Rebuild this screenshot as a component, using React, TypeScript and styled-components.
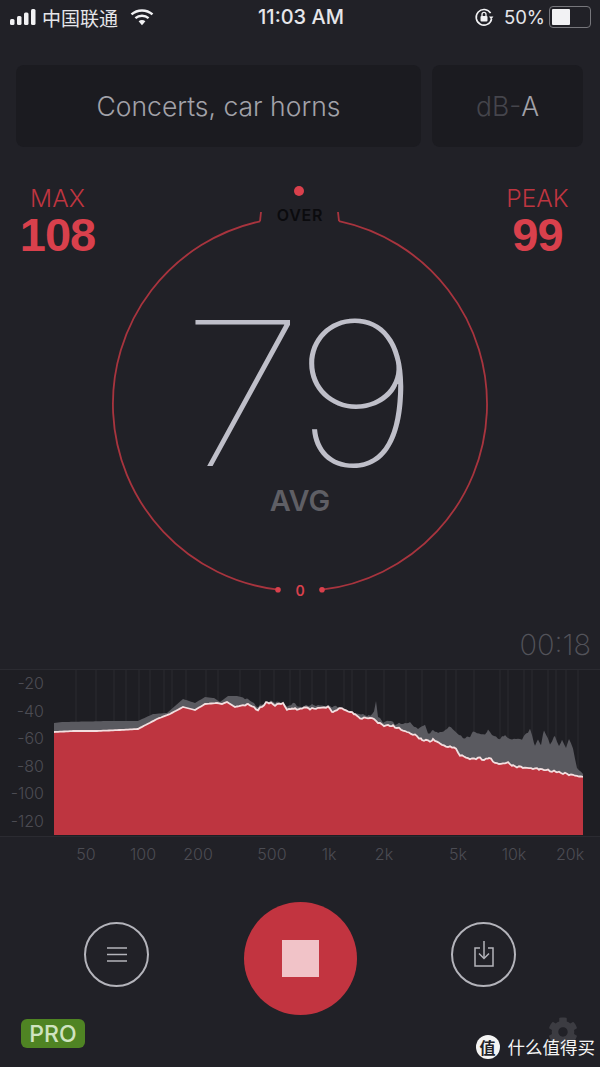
import React from "react";
import styled, { createGlobalStyle } from "styled-components";
import { FaCog } from "react-icons/fa";

const GlobalStyle = createGlobalStyle`
    html, body {
        margin: 0;
        padding: 0;
        background: #212127;
        font-family: "Inter", "Noto Sans CJK SC", sans-serif;
    }
`;

const RED = "#be3540";
const BRIGHT_RED = "#d9404c";

const Page = styled.div`
    position: relative;
    width: 600px;
    height: 1067px;
    overflow: hidden;
    background: #212127;
    display: flex;
    flex-direction: column;
`;

const StatusBar = styled.div`
    height: 34px;
    padding: 0 8px 0 10px;
    display: grid;
    grid-template-columns: 1fr auto 1fr;
    align-items: center;
    color: #e6e6ea;
    font-size: 18px;
`;

const StatusLeft = styled.div`
    display: flex;
    align-items: center;
    gap: 5px;
`;

const Carrier = styled.span`
    font-family: "Noto Sans CJK SC", sans-serif;
    font-size: 19px;
    margin-right: 7px;
`;

const Clock = styled.span`
    font-weight: 500;
    font-size: 20px;
`;

const StatusRight = styled.div`
    display: flex;
    align-items: center;
    justify-content: flex-end;
    gap: 4px;
`;

const Percent = styled.span`
    margin-left: 6px;
    font-weight: 400;
    font-size: 18.5px;
`;

const BatteryShell = styled.div`
    width: 36px;
    height: 16px;
    border: 1px solid #77777c;
    border-radius: 4px;
    padding: 2px;
    box-sizing: content-box;
    display: flex;
    margin-right: 1px;
`;

const BatteryFill = styled.div`
    width: 50%;
    background: #f2f2f4;
    border-radius: 1px;
`;

const SelectorRow = styled.div`
    margin-top: 31px;
    padding: 0 17px 0 16px;
    display: grid;
    grid-template-columns: 405px 1fr;
    gap: 11px;
    height: 82px;
`;

const Selector = styled.div`
    background: #1b1b20;
    border-radius: 8px;
    display: flex;
    align-items: center;
    justify-content: center;
    font-size: 26.5px;
    font-weight: 300;
    color: #a2a2a9;
`;

const DimUnit = styled.span`
    color: #45454c;
`;

const GaugeRow = styled.div`
    margin-top: 33px;
    height: 420px;
    display: grid;
    grid-template-columns: 110px 380px 110px;
`;

const Stat = styled.div<{ $side: "left" | "right" }>`
    display: flex;
    flex-direction: column;
    align-items: center;
    padding: ${(p) => (p.$side === "left" ? "6px 0 0 5px" : "6px 15px 0 0")};
`;

const StatLabel = styled.span`
    color: ${RED};
    font-size: 24.5px;
    line-height: 24px;
    font-weight: 300;
`;

const StatValue = styled.span`
    margin-top: 2px;
    color: ${BRIGHT_RED};
    font-family: "Liberation Sans", sans-serif;
    font-size: 47px;
    line-height: 46px;
    font-weight: 700;
    letter-spacing: -1px;
`;

const GaugeStage = styled.div`
    position: relative;
    display: flex;
    flex-direction: column;
    align-items: center;
`;

const GaugeRing = styled.svg`
    position: absolute;
    left: 0;
    top: 0;
`;

const OverLabel = styled.span`
    position: absolute;
    top: 25px;
    left: 0;
    right: 0;
    text-align: center;
    color: #0b0b0e;
    font-size: 16px;
    font-weight: 600;
    letter-spacing: 0.8px;
`;

const BigValue = styled.span`
    position: absolute;
    top: 113px;
    left: 0;
    right: 0;
    text-align: center;
    color: #bfbfc9;
    font-size: 200px;
    line-height: 200px;
    font-weight: 100;
    letter-spacing: -8px;
    transform: translateX(-4px) scaleX(1.12);
`;

const AvgLabel = styled.span`
    position: absolute;
    top: 303px;
    left: 0;
    right: 0;
    text-align: center;
    color: #5f5f65;
    font-size: 29px;
    font-weight: 600;
`;

const ZeroLabel = styled.span`
    position: absolute;
    top: 402px;
    left: 0;
    right: 0;
    text-align: center;
    color: ${BRIGHT_RED};
    font-size: 14px;
    font-weight: 600;
`;

const Timer = styled.div`
    margin-top: 28px;
    padding-right: 9px;
    text-align: right;
    color: #53535a;
    font-size: 29px;
    line-height: 34px;
    font-weight: 200;
`;

const ChartPanel = styled.div`
    margin-top: 7px;
    height: 166px;
    display: grid;
    grid-template-columns: 54px 529px 17px;
    background: #1e1e23;
    border-top: 1px solid #2b2b31;
    border-bottom: 1px solid #2b2b31;
`;

const YAxis = styled.div`
    display: flex;
    flex-direction: column;
    justify-content: space-between;
    padding: 3px 10px 5px 0;
    align-items: flex-end;
`;

const AxisText = styled.span`
    color: #4c4c53;
    font-size: 16px;
    line-height: 20px;
    font-weight: 300;
`;

const XAxis = styled.div`
    height: 34px;
    padding-left: 66px;
    display: flex;
    align-items: center;
`;

const XTick = styled(AxisText)<{ $gap: number }>`
    width: 40px;
    flex: none;
    text-align: center;
    white-space: nowrap;
    margin-left: ${(p) => p.$gap}px;
`;

const Controls = styled.div`
    margin-top: 31px;
    height: 113px;
    padding: 0 84px;
    display: flex;
    align-items: center;
    justify-content: space-between;
`;

const RoundButton = styled.div`
    width: 61px;
    height: 61px;
    border: 2px solid #b4b4bb;
    border-radius: 50%;
    display: flex;
    align-items: center;
    justify-content: center;
    color: #b4b4bb;
    margin-bottom: 9px;
`;

const RecordButton = styled.div`
    width: 113px;
    height: 113px;
    border-radius: 50%;
    background: #c23440;
    display: flex;
    align-items: center;
    justify-content: center;
`;

const StopSquare = styled.div`
    width: 37px;
    height: 37px;
    background: #f1c3c8;
`;

const Footer = styled.div`
    padding: 4px 21px 0;
    display: flex;
    justify-content: space-between;
    align-items: flex-start;
`;

const ProBadge = styled.div`
    width: 64px;
    height: 29px;
    border-radius: 6px;
    background: #4f8423;
    color: #cfe3c0;
    font-size: 23px;
    font-weight: 500;
    display: flex;
    align-items: center;
    justify-content: center;
`;

const Gear = styled(FaCog)`
    color: #3c3c42;
    font-size: 30px;
    margin-right: 1px;
    margin-top: -2px;
`;

const Watermark = styled.div`
    position: absolute;
    right: 5px;
    bottom: 7px;
    display: flex;
    align-items: center;
    gap: 8px;
    color: #f4f4f4;
    font-family: "Noto Sans CJK SC", sans-serif;
    font-size: 17.5px;
    line-height: 26px;
`;

const WatermarkMark = styled.span`
    width: 24px;
    height: 24px;
    border-radius: 50%;
    background: #f4f4f4;
    color: #222228;
    font-size: 16px;
    font-weight: 700;
    display: flex;
    align-items: center;
    justify-content: center;
`;

// spectrum traces, read off the picture as x, y in chart pixels
const levelTrace = [
    [0, 62], [19, 61], [43, 61], [66, 60], [84, 59], [103, 49], [116, 44], [129, 37], [141, 40], [151, 34],
    [163, 33], [168, 34], [173, 32], [181, 37], [194, 34], [204, 40], [213, 32], [221, 35], [229, 33], [233, 40],
    [238, 38], [241, 39], [246, 39], [251, 37], [256, 39], [274, 37], [279, 42], [286, 38], [301, 44], [306, 48],
    [318, 48], [328, 55], [339, 56], [353, 62], [363, 66], [368, 70], [378, 71], [379, 69], [386, 74], [394, 77],
    [400, 77], [406, 85], [416, 89], [426, 88], [430, 90], [435, 88], [443, 94], [454, 93], [459, 96], [473, 98],
    [486, 99], [503, 102], [513, 104], [529, 107],
];

const peakTrace = [
    [0, 53], [9, 52], [56, 51], [84, 51], [99, 44], [113, 43], [129, 29], [141, 33], [151, 27], [160, 28],
    [166, 32], [174, 26], [183, 26], [194, 29], [204, 37], [213, 31], [229, 33], [233, 37], [239, 33], [246, 37],
    [256, 35], [274, 36], [286, 37], [301, 43], [316, 46], [320, 42], [322, 31], [324, 46], [329, 53], [335, 50],
    [341, 54], [356, 53], [364, 59], [371, 54], [374, 64], [379, 60], [384, 63], [391, 61], [395, 56], [403, 63],
    [409, 68], [416, 67], [419, 62], [431, 65], [434, 59], [438, 65], [446, 69], [451, 65], [454, 69], [468, 69],
    [476, 59], [481, 76], [484, 70], [487, 75], [490, 60], [496, 74], [501, 66], [505, 77], [508, 70], [512, 78],
    [515, 68], [519, 79], [523, 98], [529, 104],
];

const gridLines = [
    22, 42, 60, 72, 85, 96, 110, 118, 132, 152, 164, 186, 206, 220, 236, 246, 258, 272, 290, 298, 312, 330, 352,
    368, 392, 402, 420, 446, 454, 470, 478, 494, 502, 512, 524,
];

const CHART_HEIGHT = 165;

// fill in the traces at 2px steps with a little wobble so they read as measured data
const roughen = (trace: number[][], amount: number) => {
    const out: number[][] = [];
    for (let i = 0; i < trace.length - 1; i++) {
        const [x0, y0] = trace[i];
        const [x1, y1] = trace[i + 1];
        for (let x = x0; x < x1; x += 2) {
            const y = y0 + ((y1 - y0) * (x - x0)) / (x1 - x0);
            const wobble = x > 190 ? Math.sin(x * 1.7) * Math.cos(x * 0.61) * amount : 0;
            out.push([x, +(y + wobble).toFixed(1)]);
        }
    }
    out.push(trace[trace.length - 1]);
    return out;
};

const level = roughen(levelTrace, 1);
const peak = roughen(peakTrace, 1.2);

const toPoints = (trace: number[][]) => trace.map(([x, y]) => `${x},${y}`).join(" ");

const toArea = (trace: number[][]) => `0,${CHART_HEIGHT} ${toPoints(trace)} 529,${CHART_HEIGHT}`;

const Spectrum = () => (
    <svg width="529" height={CHART_HEIGHT} viewBox={`0 0 529 ${CHART_HEIGHT}`}>
        {gridLines.map((x) => (
            <line key={x} x1={x} x2={x} y1="0" y2={CHART_HEIGHT} stroke="#2a2a30" strokeWidth="1" />
        ))}
        <polygon points={toArea(peak)} fill="#5a5a60" />
        <polygon points={toArea(level)} fill={RED} />
        <polyline points={toPoints(level)} fill="none" stroke="#f3dfe0" strokeWidth="1.8" />
    </svg>
);

const SignalIcon = () => (
    <svg width="27" height="16" viewBox="0 0 27 16">
        <rect x="0" y="10" width="4.5" height="6" rx="1.5" fill="#f2f2f4" />
        <rect x="7" y="7" width="4.5" height="9" rx="1.5" fill="#f2f2f4" />
        <rect x="14" y="3.5" width="4.5" height="12.5" rx="1.5" fill="#f2f2f4" />
        <rect x="21" y="0" width="4.5" height="16" rx="1.5" fill="#f2f2f4" />
    </svg>
);

const WifiIcon = () => (
    <svg width="24" height="18" viewBox="0 0 24 18">
        <g fill="none" stroke="#f2f2f4" strokeWidth="2.4">
            <path d="M1.5 6.4C7.4 1.1 16.6 1.1 22.5 6.4" />
            <path d="M5.4 10.2C9.1 7 14.9 7 18.6 10.2" />
        </g>
        <path d="M8.6 13.2C10.6 11.7 13.4 11.7 15.4 13.2L12 17.2Z" fill="#f2f2f4" />
    </svg>
);

const RotationLockIcon = () => (
    <svg width="20" height="20" viewBox="0 0 20 20">
        <path d="M16.6 6.2A7.8 7.8 0 1 0 17.6 12" fill="none" stroke="#f2f2f4" strokeWidth="1.6" />
        <path d="M19.4 9.5L15 9.5L17.2 12.6Z" fill="#f2f2f4" />
        <rect x="6.5" y="9" width="7" height="5.5" rx="1" fill="#f2f2f4" />
        <path d="M8 9V7.4a2 2 0 0 1 4 0V9" fill="none" stroke="#f2f2f4" strokeWidth="1.3" />
    </svg>
);

const MenuIcon = () => (
    <svg width="20" height="15" viewBox="0 0 20 15" stroke="currentColor" strokeWidth="1.5">
        <line x1="0" x2="20" y1="1" y2="1" />
        <line x1="0" x2="20" y1="7.5" y2="7.5" />
        <line x1="0" x2="20" y1="14" y2="14" />
    </svg>
);

const ExportIcon = () => (
    <svg width="20" height="26" viewBox="0 0 20 26" fill="none" stroke="currentColor" strokeWidth="1.5">
        <path d="M6 7H1V25H19V7H14" />
        <path d="M10 0V17" />
        <path d="M5 12.5L10 17.5L15 12.5" />
    </svg>
);

// all in stage pixels, ring centre at 190,224
const Ring = () => (
    <GaugeRing width="380" height="420" viewBox="0 0 380 420">
        <g fill="none" stroke="#a8343e" strokeWidth="1.8">
            <path d="M229 41.1A187 187 0 0 1 212 409.7" />
            <path d="M168 409.7A187 187 0 0 1 150 41.3" />
            <path d="M150 41.3L151 32" />
            <path d="M229 41.1L228 32" />
        </g>
        <circle cx="189" cy="11" r="5" fill={BRIGHT_RED} />
        <circle cx="168" cy="409.7" r="2.8" fill={BRIGHT_RED} />
        <circle cx="212" cy="409.7" r="2.8" fill={BRIGHT_RED} />
    </GaugeRing>
);

export default function App() {
    const yLabels = ["-20", "-40", "-60", "-80", "-100", "-120"];
    const xLabels: [string, number][] = [
        ["50", 0],
        ["100", 17],
        ["200", 15],
        ["500", 34],
        ["1k", 17],
        ["2k", 15],
        ["5k", 34],
        ["10k", 16],
        ["20k", 16],
    ];

    return (
        <Page>
            <GlobalStyle />
            <StatusBar>
                <StatusLeft>
                    <SignalIcon />
                    <Carrier>中国联通</Carrier>
                    <WifiIcon />
                </StatusLeft>
                <Clock>11:03 AM</Clock>
                <StatusRight>
                    <RotationLockIcon />
                    <Percent>50%</Percent>
                    <BatteryShell>
                        <BatteryFill />
                    </BatteryShell>
                </StatusRight>
            </StatusBar>

            <SelectorRow>
                <Selector>Concerts, car horns</Selector>
                <Selector>
                    <DimUnit>dB-</DimUnit>A
                </Selector>
            </SelectorRow>

            <GaugeRow>
                <Stat $side="left">
                    <StatLabel>MAX</StatLabel>
                    <StatValue>108</StatValue>
                </Stat>
                <GaugeStage>
                    <Ring />
                    <OverLabel>OVER</OverLabel>
                    <BigValue>79</BigValue>
                    <AvgLabel>AVG</AvgLabel>
                    <ZeroLabel>0</ZeroLabel>
                </GaugeStage>
                <Stat $side="right">
                    <StatLabel>PEAK</StatLabel>
                    <StatValue>99</StatValue>
                </Stat>
            </GaugeRow>

            <Timer>00:18</Timer>

            <ChartPanel>
                <YAxis>
                    {yLabels.map((label) => (
                        <AxisText key={label}>{label}</AxisText>
                    ))}
                </YAxis>
                <Spectrum />
            </ChartPanel>
            <XAxis>
                {xLabels.map(([label, gap]) => (
                    <XTick key={label} $gap={gap}>
                        {label}
                    </XTick>
                ))}
            </XAxis>

            <Controls>
                <RoundButton>
                    <MenuIcon />
                </RoundButton>
                <RecordButton>
                    <StopSquare />
                </RecordButton>
                <RoundButton>
                    <ExportIcon />
                </RoundButton>
            </Controls>

            <Footer>
                <ProBadge>PRO</ProBadge>
                <Gear />
            </Footer>

            <Watermark>
                <WatermarkMark>值</WatermarkMark>
                什么值得买
            </Watermark>
        </Page>
    );
}
